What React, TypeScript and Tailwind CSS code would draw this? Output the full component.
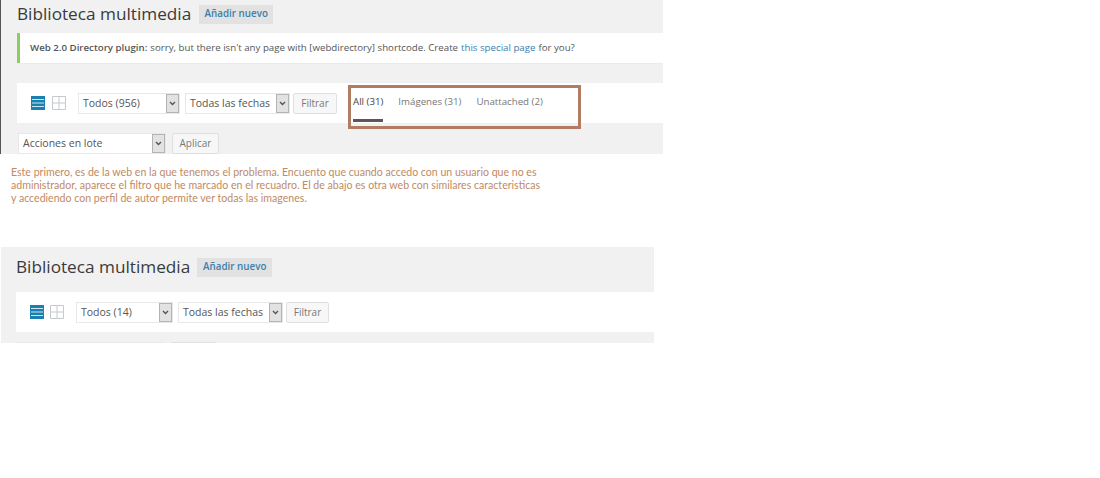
import React from "react";

const sans = "font-['Open_Sans',sans-serif]";

function Caret() {
  return (
    <span className="flex h-full w-[13px] shrink-0 items-center justify-center border border-[#b4b4b4] bg-[#e2e2e2]">
      <svg width="7" height="5" viewBox="0 0 7 5"><path d="M1 1l2.5 2.5L6 1" fill="none" stroke="#555" strokeWidth="1.4" /></svg>
    </span>
  );
}

function Select({ label, w }: { label: string; w: string }) {
  return (
    <div className={`flex h-[21px] items-center justify-between border border-[#e8e8e8] bg-white ${w}`}>
      <span className="pl-[4px] text-[10.5px] leading-none whitespace-nowrap text-[#555]">{label}</span>
      <Caret />
    </div>
  );
}

function Btn({ label, w }: { label: string; w: string }) {
  return (
    <div className={`flex h-[21px] items-center justify-center rounded-[2px] border border-[#e0e0e0] bg-[#f7f7f7] text-[10px] text-[#777] ${w}`}>
      {label}
    </div>
  );
}

function ListIcon() {
  return (
    <svg width="14" height="14" viewBox="0 0 14 14" className="shrink-0">
      <rect width="14" height="14" fill="#1b7fb0" />
      <path d="M1 3.5h12M1 7h12M1 10.5h12" stroke="#cfe6f2" strokeWidth="1" />
    </svg>
  );
}

function GridIcon() {
  return (
    <svg width="14" height="14" viewBox="0 0 14 14" className="shrink-0">
      <path d="M.5.5h13v13H.5zM7 .5v13M.5 7h13" fill="none" stroke="#c4cacd" strokeWidth="1" />
    </svg>
  );
}

function Heading({ gap, w }: { gap: string; w: string }) {
  return (
    <div className={`flex items-center ${gap}`}>
      <h1 className="mb-[2px] text-[17.2px] leading-none whitespace-nowrap text-[#3a3a3a]">Biblioteca multimedia</h1>
      <div className={`flex h-[19px] items-center justify-center bg-[#e2e2e2] text-[9.8px] font-semibold text-[#3b80aa] ${w}`}>
        Añadir nuevo
      </div>
    </div>
  );
}

export default function App() {
  return (
    <div className={`relative h-[478px] w-[1100px] overflow-hidden bg-white ${sans}`}>
      {/* First panel */}
      <section className="h-[154px] w-[663px] border-l border-[#555] bg-[#f1f1f1] pt-[5px] pl-4">
        <Heading gap="gap-2" w="w-[74px]" />
        <div className="mt-[9px] flex h-[30px] items-center border-l-[3px] border-[#8ccf5c] bg-white pl-[10px] text-[9.7px] whitespace-nowrap text-[#555] shadow-[0_1px_0_#ebebeb]">
          <b className="mr-[3px] font-semibold">Web 2.0 Directory plugin:</b>
          sorry, but there isn't any page with [webdirectory] shortcode. Create
          <span className="mx-[3px] text-[#3b80aa]">this special page</span>
          for you?
        </div>
        <div className="relative mt-5 flex h-10 items-center bg-white pl-[14px]">
          <div className="flex items-center gap-[7px]">
            <ListIcon />
            <GridIcon />
          </div>
          <div className="ml-[12px] flex items-center gap-[5px]">
            <Select label="Todos (956)" w="w-[102px]" />
            <Select label="Todas las fechas" w="w-[105px]" />
            <Btn label="Filtrar" w="-ml-[2px] w-[44px]" />
          </div>
          <div className="ml-4 flex h-full items-start gap-[15px] pt-[12px] text-[9.7px] whitespace-nowrap text-[#777]">
            <span className="relative text-[#444]">
              All (31)
              <span className="absolute top-[24px] left-0 h-[3px] w-full bg-[#5c5560]" />
            </span>
            <span>Imágenes (31)</span>
            <span>Unattached (2)</span>
          </div>
        </div>
        <div className="mt-[10px] ml-px flex gap-[6px]">
          <Select label="Acciones en lote" w="w-[148px]" />
          <Btn label="Aplicar" w="w-[47px]" />
        </div>
      </section>

      {/* Callout over the toolbar */}
      <div className="absolute top-[85px] left-[348px] h-[44px] w-[233px] border-[3px] border-[#b27c62]" />

      {/* Note */}
      <p className="mt-[12px] ml-[11px] font-['Lato',sans-serif] text-[10.58px] leading-[13px] whitespace-nowrap text-[#c08a63]">
        Este primero, es de la web en la que tenemos el problema. Encuento que cuando accedo con un usuario que no es
        <br />
        administrador, aparece el filtro que he marcado en el recuadro. El de abajo es otra web con similares caracteristicas
        <br />
        y accediendo con perfil de autor permite ver todas las imagenes.
      </p>

      {/* Second panel */}
      <section className="mt-[42px] ml-px h-[96px] w-[653px] overflow-hidden bg-[#f1f1f1] pt-[11px] pl-[15px]">
        <Heading gap="gap-[7px]" w="w-[75px]" />
        <div className="mt-[15px] flex h-10 items-center bg-white pl-[14px]">
          <div className="flex items-center gap-[6px]">
            <ListIcon />
            <GridIcon />
          </div>
          <div className="ml-[12px] flex items-center gap-[5px]">
            <Select label="Todos (14)" w="w-[97px]" />
            <Select label="Todas las fechas" w="w-[105px]" />
            <Btn label="Filtrar" w="-ml-[2px] w-[43px]" />
          </div>
        </div>
        <div className="mt-[10px] flex gap-[5px]">
          <Select label="" w="w-[149px]" />
          <Btn label="" w="w-[47px]" />
        </div>
      </section>
    </div>
  );
}
